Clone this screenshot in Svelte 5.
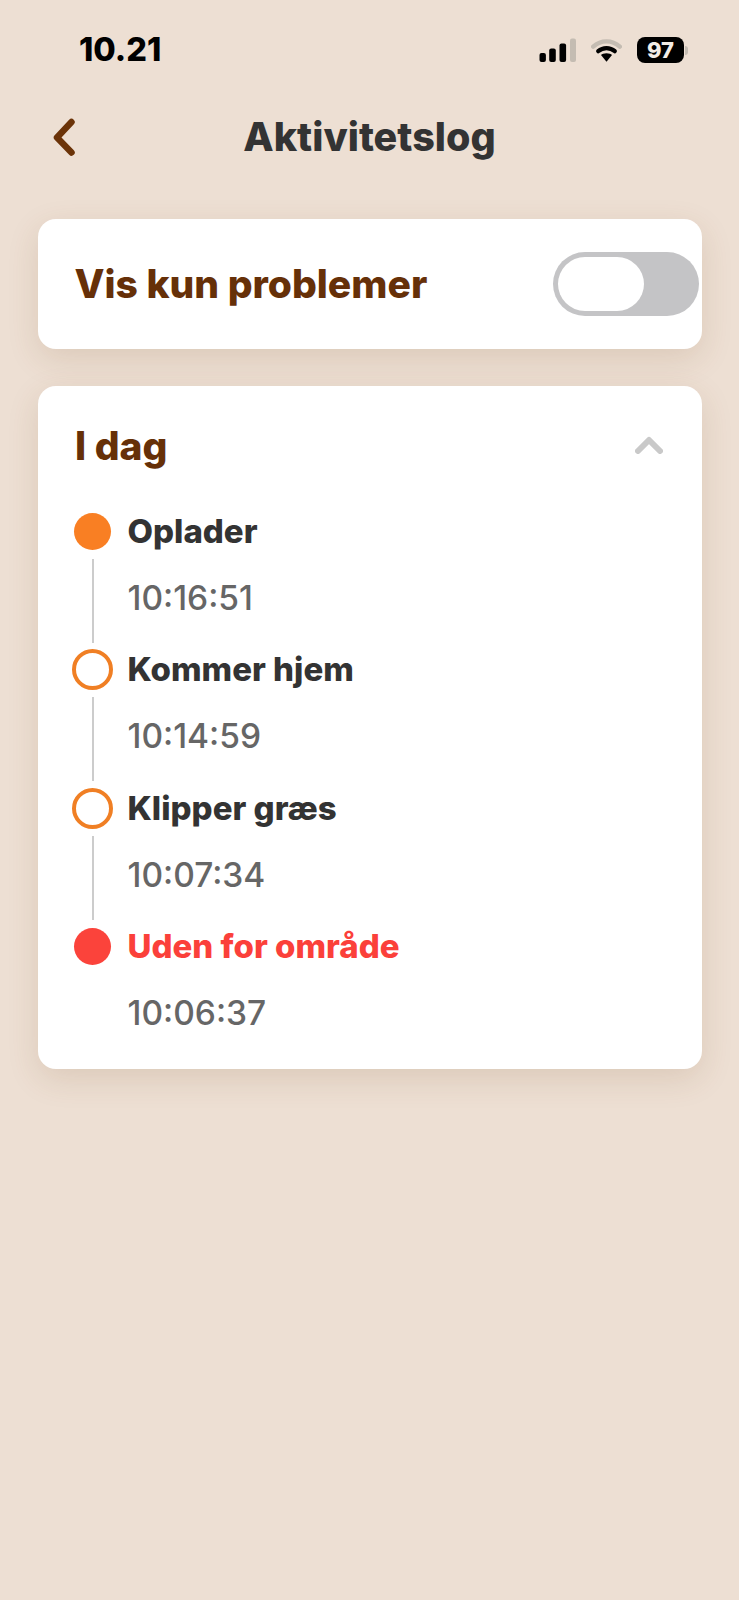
<script>
  const events = [
    { label: 'Oplader', time: '10:16:51', kind: 'filled' },
    { label: 'Kommer hjem', time: '10:14:59', kind: 'ring' },
    { label: 'Klipper græs', time: '10:07:34', kind: 'ring' },
    { label: 'Uden for område', time: '10:06:37', kind: 'alert' }
  ];
</script>

<div class="page">
  <div class="status">
    <span class="clock">10.21</span>
    <div class="indicators">
      <svg class="signal" width="38" height="24" viewBox="0 0 38 24">
        <rect x="0.5" y="15" width="6.4" height="9" rx="2" fill="#000" />
        <rect x="10.2" y="10.5" width="6.6" height="13.5" rx="2" fill="#000" />
        <rect x="20.5" y="5.5" width="6.6" height="18.5" rx="2" fill="#000" />
        <rect x="31" y="0.5" width="6" height="23.5" rx="2" fill="#c4bcb2" />
      </svg>
      <svg class="wifi" width="31" height="24" viewBox="0 0 31 24">
        <path d="M2.2 8.6 C10 1.6 21 1.6 28.8 8.6" fill="none" stroke="#c4bcb2" stroke-width="4.4" stroke-linecap="round" />
        <path d="M7.2 13.2 C12 9 19 9 23.8 13.2" fill="none" stroke="#000" stroke-width="4.2" stroke-linecap="round" />
        <path d="M15.5 15.2 C18 15.2 20 16 21 17 L15.5 23.8 L10 17 C11 16 13 15.2 15.5 15.2 Z" fill="#000" />
      </svg>
      <div class="battery"><span class="level">97</span></div>
      <span class="cap"></span>
    </div>
  </div>

  <header class="nav">
    <svg class="back" width="26" height="38" viewBox="0 0 26 38">
      <path d="M20.5 4 L6 19.500 L20.5 34.500" fill="none" stroke="#6b3308" stroke-width="6.5" stroke-linecap="round" stroke-linejoin="round" />
    </svg>
    <h1>Aktivitetslog</h1>
  </header>

  <section class="card filter">
    <span class="heading">Vis kun problemer</span>
    <div class="toggle"><span class="knob"></span></div>
  </section>

  <section class="card log">
    <div class="log-head">
      <span class="heading">I dag</span>
      <svg width="28" height="18" viewBox="0 0 28 18">
        <path d="M3 15 L14 4 L25 15" fill="none" stroke="#c9c9c9" stroke-width="6" stroke-linecap="round" stroke-linejoin="round" />
      </svg>
    </div>
    <ul class="events">
      {#each events as e, i}
        <li class="event">
          <div class="rail">
            <span class="dot {e.kind}"></span>
            {#if i < events.length - 1}<span class="line"></span>{/if}
          </div>
          <div class="body">
            <div class="label" class:red={e.kind === 'alert'}>{e.label}</div>
            <div class="time">{e.time}</div>
          </div>
        </li>
      {/each}
    </ul>
  </section>
</div>

<style>
  :global(body) {
    margin: 0;
    background: #eddfd3;
  }
  .page {
    box-sizing: border-box;
    height: 1600px;
    background: #eddfd3;
    font-family: Inter, "Liberation Sans", sans-serif;
    padding: 35px 37.5px 0;
    overflow: hidden;
  }
  .status {
    display: flex;
    justify-content: space-between;
    align-items: center;
    height: 28px;
    padding-left: 41.5px;
    margin-right: 13.5px;
  }
  .clock {
    font-size: 32.5px;
    font-weight: 800;
    color: #000;
  }
  .indicators {
    display: flex;
    align-items: center;
    position: relative;
    top: 1px;
  }
  .signal { margin-right: 14px; }
  .wifi { margin-right: 15px; }
  .battery {
    width: 47px;
    height: 26px;
    border-radius: 8px;
    background: #000;
    display: flex;
    align-items: center;
    justify-content: center;
  }
  .level {
    color: #f3ede6;
    font-size: 22px;
    font-weight: 800;
    line-height: 1;
  }
  .cap {
    width: 3px;
    height: 9px;
    margin-left: 1px;
    border-radius: 0 3px 3px 0;
    background: #c4bcb2;
  }
  .nav {
    position: relative;
    display: flex;
    justify-content: center;
    align-items: center;
    height: 50px;
    margin-top: 49px;
  }
  .back {
    position: absolute;
    left: 13px;
    top: 6px;
  }
  h1 {
    margin: 0;
    font-size: 39.5px;
    font-weight: 800;
    color: #333333;
    line-height: 50px;
  }
  .card {
    background: #fff;
    border-radius: 18px;
    box-shadow: 0 10px 32px rgba(110, 70, 30, 0.14);
  }
  .filter {
    box-sizing: border-box;
    height: 129.500px;
    margin-top: 57px;
    padding: 0 3px 0 37px;
    display: flex;
    align-items: center;
    justify-content: space-between;
  }
  .heading {
    font-size: 39px;
    font-weight: 800;
    color: #663008;
  }
  .toggle {
    box-sizing: border-box;
    width: 146px;
    height: 64px;
    border-radius: 32px;
    background: #c4c4c6;
    padding: 5px;
  }
  .knob {
    display: block;
    width: 86px;
    height: 54px;
    border-radius: 27px;
    background: #fff;
  }
  .log {
    box-sizing: border-box;
    height: 683.500px;
    margin-top: 37px;
    padding: 37px 39px 0 37.5px;
  }
  .log-head {
    display: flex;
    align-items: center;
    justify-content: space-between;
    height: 45px;
  }
  .events {
    list-style: none;
    margin: 45px 0 0 -1px;
    padding: 0;
  }
  .event {
    display: flex;
    height: 138.600px;
  }
  .rail {
    position: relative;
    width: 53.5px;
    flex: none;
  }
  .dot {
    position: absolute;
    box-sizing: border-box;
    left: 0;
    top: 0;
    width: 37px;
    height: 37px;
    border-radius: 50%;
  }
  .filled { background: #f97f23; }
  .alert { background: #fb433b; }
  .ring {
    left: -2px;
    top: -2px;
    width: 41px;
    height: 41px;
    border: 4.500px solid #f07f24;
    background: #fff;
  }
  .line {
    position: absolute;
    left: 17.500px;
    top: 46px;
    width: 2px;
    height: 84px;
    background: #cccccc;
  }
  .label {
    font-size: 33px;
    font-weight: 800;
    line-height: 36px;
    color: #333333;
  }
  .label.red { color: #fb403a; }
  .time {
    font-size: 33.5px;
    font-weight: 500;
    line-height: 37px;
    color: #666666;
    margin-top: 31px;
  }
</style>
